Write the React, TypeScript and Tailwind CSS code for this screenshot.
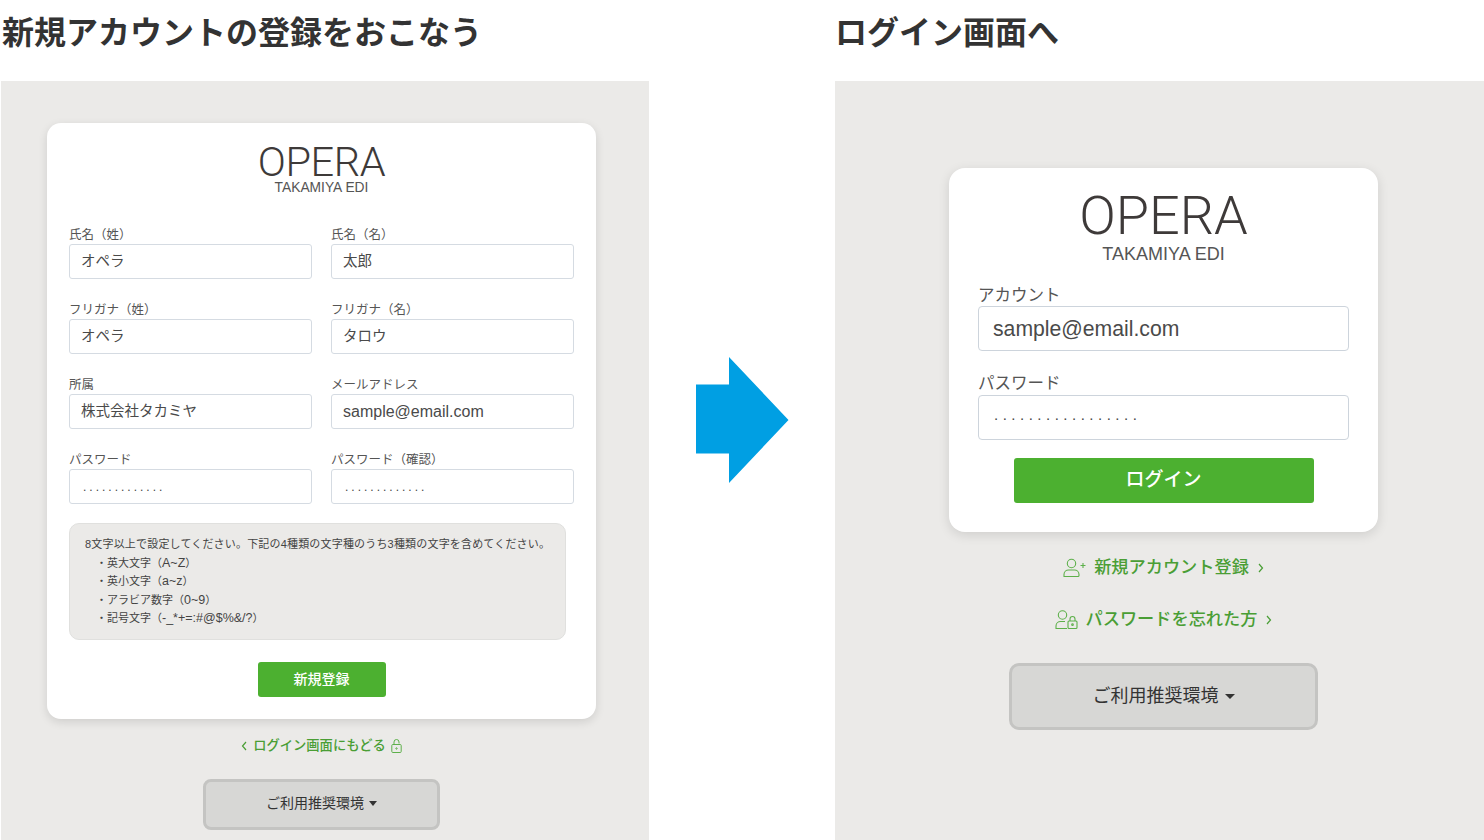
import React from "react";

const font = "font-['Liberation_Sans','Noto_Sans_CJK_JP',sans-serif]";

function Field({ label, value, email, dots }: { label: string; value?: string; email?: boolean; dots?: number }) {
  return (
    <div className="flex flex-col">
      <div className="h-[18px] text-[12.5px] leading-[19px] text-[#555]">{label}</div>
      <div className={`flex h-[35px] items-center rounded-[3px] border border-[#d5dbe2] bg-white pl-[11px] text-[#4a4a4a] ${email ? "text-[16px]" : "text-[14.5px]"}`}>
        {dots ? <span className="pl-[2px] text-[12px] leading-none tracking-[3px] text-[#444]">{".".repeat(dots)}</span> : value}
      </div>
    </div>
  );
}

function Logo({ big }: { big?: boolean }) {
  return (
    <div className="flex flex-col items-center text-[#3e3a39]">
      <div className={`font-['Roboto',sans-serif] font-light ${big ? "text-[54px] leading-[52px] tracking-[0px]" : "text-[41.5px] leading-[40px] tracking-[-0.4px]"}`}>OPERA</div>
      <div className={big ? "mt-[2px] text-[18px] leading-[20px] text-[#555]" : "mt-[-1px] text-[13.8px] leading-[14px] text-[#555]"}>TAKAMIYA EDI</div>
    </div>
  );
}

function Caret({ big }: { big?: boolean }) {
  return (
    <span
      className={
        big
          ? "ml-[6px] inline-block border-x-[5.5px] border-t-[5px] border-x-transparent border-t-[#333]"
          : "ml-[5px] inline-block border-x-[4.5px] border-t-[5px] border-x-transparent border-t-[#333]"
      }
    />
  );
}

function Chevron({ left }: { left?: boolean }) {
  return (
    <svg width="7" height="10" viewBox="0 0 7 10" fill="none" stroke="#4a9e35" strokeWidth="1.2">
      <path d={left ? "M5 1L1.500 5 5 9" : "M2 1l3.500 4L2 9"} />
    </svg>
  );
}

function UserPlus() {
  return (
    <svg width="23" height="20" viewBox="0 0 23 20" fill="none" stroke="#5db04a" strokeWidth="1.1">
      <circle cx="8.5" cy="5.5" r="4.2" />
      <path d="M1 18.500v-2c0-3 2.500-4.500 4.500-4.500h6c2 0 4.500 1.500 4.500 4.500v1c0 .6-.4 1-1 1H1z" />
      <path d="M17.500 7.500h5M20 5v5" />
    </svg>
  );
}

function UserLock() {
  return (
    <svg width="23" height="20" viewBox="0 0 23 20" fill="none" stroke="#5db04a" strokeWidth="1.1">
      <circle cx="7.500" cy="5" r="4.200" />
      <path d="M12 18.500H1v-2.500c0-3 2.500-4.500 4.500-4.500H10" />
      <rect x="13" y="11" width="9" height="7.500" rx="1" />
      <path d="M15 11V9a2.500 2.500 0 0 1 5 0v2" />
      <circle cx="17.500" cy="14.700" r=".8" />
    </svg>
  );
}

function Lock() {
  return (
    <svg width="11" height="14" viewBox="0 0 11 14" fill="none" stroke="#5db04a" strokeWidth="1">
      <rect x=".8" y="5.500" width="9.400" height="8" rx="1" />
      <path d="M3 5.500V3a2.500 2.500 0 0 1 5 0v1.500" />
      <circle cx="5.500" cy="9.500" r=".7" />
    </svg>
  );
}

function Rule({ name, chars }: { name: string; chars: string }) {
  return (
    <div className="pl-[11px]">
      ・{name}（<span className="text-[12.5px]">{chars}</span>）
    </div>
  );
}

export default function App() {
  return (
    <div className={`${font} flex h-[840px] w-[1484px] overflow-hidden bg-white pl-[1px] text-[#333]`}>
      <section className="flex w-[648px] flex-col">
        <h1 className="h-[81px] pt-[11px] pl-[1px] text-[32px] leading-[44px] font-bold text-[#333]">新規アカウントの登録をおこなう</h1>
        <div className="flex flex-1 flex-col items-center bg-[#ebeae8] pt-[42px] pr-[7px]">
          <div className="h-[596px] w-[549px] rounded-[14px] bg-white px-[22px] pt-[19px] shadow-[0_3px_10px_rgba(0,0,0,0.12)]">
            <Logo />
            <div className="mt-[31px] grid grid-cols-2 gap-x-[19px] gap-y-[22px]">
              <Field label="氏名（姓）" value="オペラ" />
              <Field label="氏名（名）" value="太郎" />
              <Field label="フリガナ（姓）" value="オペラ" />
              <Field label="フリガナ（名）" value="タロウ" />
              <Field label="所属" value="株式会社タカミヤ" />
              <Field label="メールアドレス" value="sample@email.com" email />
              <Field label="パスワード" dots={13} />
              <Field label="パスワード（確認）" dots={13} />
            </div>
            <div className="mt-[19px] h-[117px] w-[497px] rounded-[10px] border border-[#e0e0de] bg-[#ebeae8] px-[15px] pt-[11px] text-[11px] leading-[18.600px] text-[#444]">
              <div className="tracking-[0.18px] whitespace-nowrap">8文字以上で設定してください。下記の4種類の文字種のうち3種類の文字を含めてください。</div>
              <Rule name="英大文字" chars="A~Z" />
              <Rule name="英小文字" chars="a~z" />
              <Rule name="アラビア数字" chars="0~9" />
              <Rule name="記号文字" chars="-_*+=:#@$%&/?" />
            </div>
            <div className="mt-[22px] flex justify-center">
              <div className="flex h-[35px] w-[128px] items-center justify-center rounded-[3px] bg-[#4cb030] text-[14px] font-medium text-white">新規登録</div>
            </div>
          </div>
          <div className="mt-[18px] flex h-[18px] items-center gap-[5px] text-[13.300px] font-medium text-[#4a9e35]">
            <Chevron left />
            <span>ログイン画面にもどる</span>
            <Lock />
          </div>
          <div className="mt-[24px] flex h-[51px] w-[237px] items-center justify-center rounded-[8px] border-[3px] border-[#c4c4c2] bg-[#d7d7d5] pb-[2px] text-[14px] text-[#333]">
            ご利用推奨環境<Caret />
          </div>
        </div>
      </section>

      <div className="flex w-[186px] items-center pl-[46px]">
        <svg width="94" height="126" viewBox="0 0 94 126">
          <path d="M1 27.500H34V0L93.500 63 34 126V96.500H1z" fill="#009fe3" />
        </svg>
      </div>

      <section className="flex w-[649px] flex-col">
        <h1 className="h-[81px] pt-[11px] text-[32px] leading-[44px] font-bold text-[#333]">ログイン画面へ</h1>
        <div className="flex flex-1 flex-col items-center bg-[#ebeae8] pt-[87px] pl-[8px]">
          <div className="h-[364px] w-[429px] rounded-[16px] bg-white px-[29px] pt-[22px] shadow-[0_3px_12px_rgba(0,0,0,0.12)]">
            <Logo big />
            <div className="mt-[21px] h-[21px] text-[16.500px] leading-[21px] text-[#555]">アカウント</div>
            <div className="flex h-[45px] items-center rounded-[4px] border border-[#cdd4dc] pl-[14px] text-[21.200px] text-[#4a4a4a]">sample@email.com</div>
            <div className="mt-[21px] h-[23px] text-[16.500px] leading-[23px] text-[#555]">パスワード</div>
            <div className="flex h-[45px] items-center rounded-[4px] border border-[#cdd4dc] pb-[4px] pl-[15px] text-[15px] tracking-[4.500px] text-[#444]">.................</div>
            <div className="mt-[18px] flex justify-center">
              <div className="flex h-[45px] w-[300px] items-center justify-center rounded-[3px] bg-[#4cb030] text-[19px] font-medium text-white">ログイン</div>
            </div>
          </div>
          <div className="mt-[25px] flex h-[20px] items-center gap-[8px] pt-[1px] text-[17.200px] font-medium text-[#4a9e35]">
            <UserPlus />
            <span>新規アカウント登録</span>
            <Chevron />
          </div>
          <div className="mt-[32px] flex h-[20px] items-center gap-[8px] pt-[1px] text-[17.200px] font-medium text-[#4a9e35]">
            <UserLock />
            <span>パスワードを忘れた方</span>
            <Chevron />
          </div>
          <div className="mt-[34px] flex h-[67px] w-[309px] items-center justify-center rounded-[10px] border-[3px] border-[#c4c4c2] bg-[#d7d7d5] text-[18px] text-[#333]">
            ご利用推奨環境<Caret big />
          </div>
        </div>
      </section>
    </div>
  );
}
